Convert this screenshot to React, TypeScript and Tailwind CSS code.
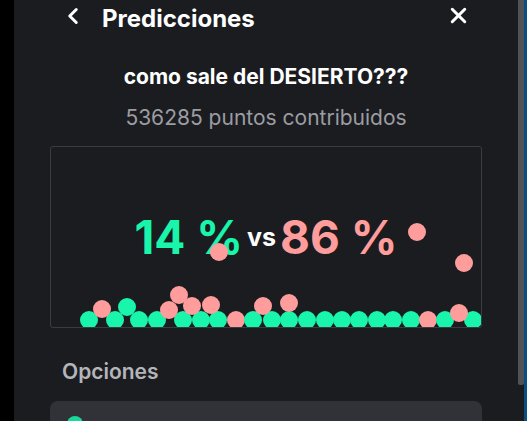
import React from 'react';
import { ChevronLeft, X } from 'lucide-react';

type Dot = { x: number; y: number; c: 'g' | 'p' };

const bottomRow: Dot[] = [
  29, 55, 79, 97, 123, 141, 158, 176, 193, 212, 229, 247, 265, 282, 299, 317, 333, 351, 368, 385, 413,
].map((x) => ({ x, y: 164, c: x === 176 || x === 368 ? 'p' : 'g' }));

const upperDots: Dot[] = [
  { x: 42, y: 153, c: 'p' },
  { x: 67, y: 151, c: 'g' },
  { x: 109, y: 154, c: 'p' },
  { x: 119, y: 139, c: 'p' },
  { x: 132, y: 150, c: 'p' },
  { x: 151, y: 149, c: 'p' },
  { x: 159, y: 96, c: 'p' },
  { x: 203, y: 150, c: 'p' },
  { x: 229, y: 147, c: 'p' },
  { x: 357, y: 76, c: 'p' },
  { x: 404, y: 107, c: 'p' },
  { x: 399, y: 157, c: 'p' },
];

const dots = [...bottomRow, ...upperDots];

const App: React.FC = () => {
  return (
    <div className="flex h-[421px] w-[527px] overflow-hidden bg-black" style={{ fontFamily: 'Inter, "Noto Sans", sans-serif' }}>
      <div className="w-[14px] shrink-0 bg-black" />

      <div className="flex flex-1 flex-col bg-[#1b1c20]">
        {/* header */}
        <div className="flex h-[34px] items-center justify-between pl-[46px] pr-[47px]">
          <div className="flex items-center gap-[16px]">
            <ChevronLeft size={26} strokeWidth={2.75} className="text-white" />
            <span className="mt-[7px] text-[24px] font-bold leading-none text-white">Predicciones</span>
          </div>
          <X size={25} strokeWidth={2.9} className="text-white" />
        </div>

        <div className="px-[36px]">
          <p className="mt-[32px] text-center text-[21px] font-bold leading-[28px] text-white">
            como sale del DESIERTO???
          </p>
          <p className="mt-[13px] text-center text-[21px] leading-[28px] text-[#9c9da3]">
            536285 puntos contribuidos
          </p>

          {/* chart */}
          <div className="relative mt-[14px] flex h-[182px] items-center justify-center overflow-hidden rounded-[3px] border border-[#3b3c41]">
            <div className="flex items-center gap-[4px] font-bold">
              <span className="text-[46px] leading-none text-[#19f5ab]">14 %</span>
              <span className="text-[25px] leading-none text-white">vs</span>
              <span className="text-[46px] leading-none text-[#ff9d9d]">86 %</span>
            </div>
            {dots.map((d, i) => (
              <div
                key={i}
                className={`absolute h-[18px] w-[18px] rounded-full ${d.c === 'g' ? 'bg-[#19f5ab]' : 'bg-[#ff9d9d]'}`}
                style={{ left: d.x, top: d.y }}
              />
            ))}
          </div>

          <p className="mt-[30px] pl-[12px] text-[21px] font-semibold leading-[28px] text-[#b4b5ba]">Opciones</p>

          <div className="relative mt-[15px] h-[60px] rounded-[8px] bg-[#303237]">
            <div className="absolute left-[17px] top-[15px] h-[16px] w-[16px] rounded-full bg-[#19d89a]" />
          </div>
        </div>
      </div>

      {/* scrollbar */}
      <div className="w-[6px] shrink-0 bg-[#1b1c20]">
        <div className="h-[385px] w-full rounded-b-[2px] bg-[#505256]" />
      </div>
      <div className="w-[3px] shrink-0 bg-[#0b4f82]" />
    </div>
  );
};

export default App;
